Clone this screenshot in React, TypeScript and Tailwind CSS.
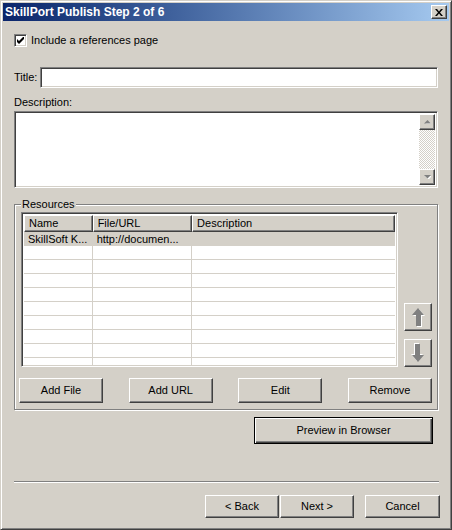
import React from "react";

const font = "font-['Liberation_Sans',Arial,sans-serif] text-[11px] text-black";
const raised =
  "border border-t-white border-l-white border-r-[#404040] border-b-[#404040] shadow-[inset_-1px_-1px_#808080] bg-[#d4d0c8]";
const sunken =
  "border border-t-[#808080] border-l-[#808080] border-r-white border-b-white shadow-[inset_1px_1px_#404040,inset_-1px_-1px_#d4d0c8] bg-white";

const Button = ({ label, className = "" }: { label: string; className?: string }) => (
  <div className={`${raised} flex items-center justify-center ${className}`}>{label}</div>
);

const ScrollArrow = ({ down }: { down?: boolean }) => (
  <div className={`${raised} w-[16px] h-[16px] flex items-center justify-center`}>
    <svg width="7" height="4" viewBox="0 0 7 4">
      {down ? (
        <>
          <polygon points="1,1 8,1 4.5,4.5" fill="white" />
          <polygon points="0,0 7,0 3.5,3.5" fill="#808080" />
        </>
      ) : (
        <>
          <polygon points="4.5,1 8,4.5 1,4.5" fill="white" />
          <polygon points="3.5,0 7,3.5 0,3.5" fill="#808080" />
        </>
      )}
    </svg>
  </div>
);

const MoveButton = ({ down }: { down?: boolean }) => (
  <div className={`${raised} w-[28px] h-[28px] flex items-center justify-center`}>
    <svg width="14" height="20" viewBox="0 0 14 20" className={down ? "rotate-180" : ""}>
      <polygon points="8,2 14,9 11,9 11,20 6,20 6,9 2,9" fill="white" />
      <polygon points="7,1 13,8 10,8 10,19 5,19 5,8 1,8" fill="#808080" />
    </svg>
  </div>
);

const rows = Array.from({ length: 9 });

export default function App() {
  return (
    <div
      className={`${font} w-[452px] h-[530px] bg-[#d4d0c8] border border-t-[#d4d0c8] border-l-[#d4d0c8] border-r-[#404040] border-b-[#404040] shadow-[inset_1px_1px_white,inset_-1px_-1px_#808080] p-[2px] flex flex-col overflow-hidden`}
    >
      {/* title bar */}
      <div className="h-[18px] flex items-center justify-between bg-gradient-to-r from-[#0a246a] to-[#a6caf0] pl-[2px] pr-[2px]">
        <span className="text-white font-bold text-[12px] leading-none">SkillPort Publish Step 2 of 6</span>
        <div className={`${raised} w-[16px] h-[14px] flex items-center justify-center`}>
          <svg width="8" height="7" viewBox="0 0 8 7">
            <path d="M0 0h2l2 2.5L6 0h2L5 3.5 8 7H6L4 4.5 2 7H0l3-3.5z" fill="black" />
          </svg>
        </div>
      </div>

      <div className="flex flex-col px-[11px]">
        {/* checkbox */}
        <div className="mt-[13px] flex items-center h-[13px]">
          <div className={`${sunken} w-[13px] h-[13px] flex items-center justify-center`}>
            <svg width="7" height="7" viewBox="0 0 7 7">
              <path d="M0 2v3l2 2 5-5V-1L2 4z" fill="black" />
            </svg>
          </div>
          <span className="ml-[4px]">Include a references page</span>
        </div>

        {/* title */}
        <div className="mt-[20px] flex items-center">
          <span className="w-[26px]">Title:</span>
          <div className={`${sunken} flex-1 h-[21px]`} />
        </div>

        {/* description */}
        <div className="mt-[8px] leading-[13px]">Description:</div>
        <div className={`${sunken} mt-[2px] h-[77px] flex justify-end p-[2px]`}>
          <div className="w-[16px] flex flex-col">
            <ScrollArrow />
            <div className="flex-1 bg-[repeating-conic-gradient(#d4d0c8_0_25%,#ffffff_0_50%)] bg-[length:2px_2px]" />
            <ScrollArrow down />
          </div>
        </div>

        {/* resources group */}
        <div className="relative mt-[16px] border border-[#808080] shadow-[1px_1px_0_white,inset_1px_1px_0_white] pt-[7px] pb-[6px] flex flex-col">
          <span className="absolute top-[-7px] left-[6px] px-[1px] bg-[#d4d0c8] leading-[13px]">Resources</span>

          <div className="flex items-end ml-[6px]">
            <div className={`${sunken} w-[377px] h-[155px] p-[2px] overflow-hidden`}>
              <div className="flex h-[17px] bg-[#d4d0c8]">
                <div className={`${raised} w-[69px] pl-[4px] flex items-center`}>Name</div>
                <div className={`${raised} w-[100px] pl-[4px] flex items-center`}>File/URL</div>
                <div className={`${raised} w-[204px] pl-[4px] flex items-center`}>Description</div>
              </div>
              <div className="flex h-[14px] bg-[#d4d0c8] items-center">
                <div className="w-[69px] pl-[4px] whitespace-nowrap">SkillSoft K...</div>
                <div className="w-[100px] pl-[4px] whitespace-nowrap">http://documen...</div>
                <div className="w-[204px]" />
              </div>
              {rows.map((_, i) => (
                <div key={i} className="flex h-[14px] border-b border-[#d4d0c8]">
                  <div className="w-[69px] border-r border-[#d4d0c8]" />
                  <div className="w-[100px] border-r border-[#d4d0c8]" />
                  <div className="w-[204px]" />
                </div>
              ))}
            </div>
            <div className="ml-[6px] flex flex-col gap-[8px]">
              <MoveButton />
              <MoveButton down />
            </div>
          </div>

          <div className="mt-[11px] ml-[4px] mr-[5px] flex justify-between">
            <Button label="Add File" className="w-[84px] h-[25px]" />
            <Button label="Add URL" className="w-[84px] h-[25px]" />
            <Button label="Edit" className="w-[84px] h-[25px]" />
            <Button label="Remove" className="w-[84px] h-[25px]" />
          </div>
        </div>

        {/* preview */}
        <div className="mt-[7px] self-end mr-[5px] w-[179px] h-[27px] border border-black bg-[#d4d0c8] shadow-[inset_1px_1px_white,inset_-1px_-1px_#404040,inset_-2px_-2px_#808080] flex items-center justify-center">
          Preview in Browser
        </div>

        {/* separator */}
        <div className="mt-[37px] mr-[-1px] h-[2px] border-t border-t-[#808080] border-b border-b-white" />

        {/* nav buttons */}
        <div className="mt-[12px] mr-[-2px] flex justify-end">
          <Button label="< Back" className="w-[74px] h-[23px]" />
          <Button label="Next >" className="ml-[1px] w-[74px] h-[23px]" />
          <Button label="Cancel" className="ml-[11px] w-[75px] h-[23px]" />
        </div>
      </div>
    </div>
  );
}
